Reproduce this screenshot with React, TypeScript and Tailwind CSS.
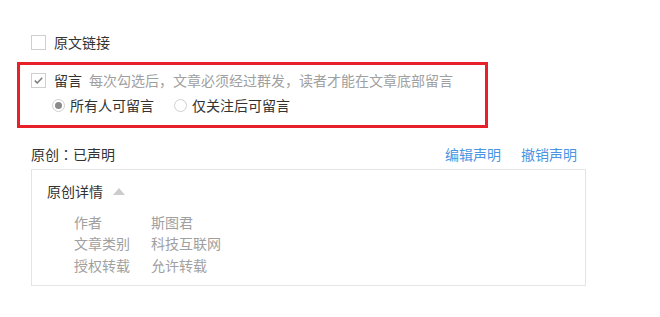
import React from 'react'

const font = { fontFamily: '"Microsoft YaHei", "Noto Sans CJK SC", "Liberation Sans", sans-serif' }

function Checkbox({ checked }: { checked?: boolean }) {
  return (
    <span className="w-[15px] h-[15px] border border-[#cfcfcf] bg-white flex items-center justify-center shrink-0">
      {checked && (
        <svg width="11" height="11" viewBox="0 0 11 11">
          <polyline points="1.8,5.6 4.3,8 9.2,2.8" fill="none" stroke="#7a7a7a" strokeWidth="1.5" />
        </svg>
      )}
    </span>
  )
}

function Radio({ checked }: { checked?: boolean }) {
  return (
    <span className="w-[13px] h-[13px] rounded-full border border-[#cfcfcf] bg-white flex items-center justify-center shrink-0">
      {checked && <span className="w-[7px] h-[7px] rounded-full bg-[#8a8a8a]" />}
    </span>
  )
}

const details = [
  { label: '作者', value: '斯图君' },
  { label: '文章类别', value: '科技互联网' },
  { label: '授权转载', value: '允许转载' },
]

export default function App() {
  return (
    <div className="w-[660px] h-[317px] bg-white overflow-hidden text-[14px] text-[#333]" style={font}>
      {/* link option */}
      <div className="mt-[32px] ml-[31px] h-[20px] flex items-center gap-[8px]">
        <Checkbox />
        <span className="leading-[20px]">原文链接</span>
      </div>

      {/* comment option, highlighted */}
      <div className="mt-[10px] ml-[17px] w-[471px] h-[66px] border-[3px] border-[#e8202a] pt-[5px]">
        <div className="pl-[11px] h-[20px] flex items-center">
          <Checkbox checked />
          <span className="ml-[8px] leading-[20px]">留言</span>
          <span className="ml-[7px] leading-[20px] text-[#a0a0a0]">每次勾选后，文章必须经过群发，读者才能在文章底部留言</span>
        </div>
        <div className="mt-[5px] pl-[32px] h-[20px] flex items-center">
          <Radio checked />
          <span className="ml-[5px] leading-[20px]">所有人可留言</span>
          <span className="ml-[20px]"><Radio /></span>
          <span className="ml-[5px] leading-[20px]">仅关注后可留言</span>
        </div>
      </div>

      {/* original declaration */}
      <div className="mt-[16px] ml-[31px] w-[546px] h-[20px] flex items-center justify-between">
        <span className="leading-[20px]">
          原创<span style={{ fontFamily: '"Noto Sans CJK TC", sans-serif' }}>：</span>已声明
        </span>
        <div className="flex gap-[20px] text-[#4a95e3] leading-[20px]">
          <span>编辑声明</span>
          <span>撤销声明</span>
        </div>
      </div>

      <div className="mt-[5px] ml-[31px] w-[555px] h-[117px] border border-[#e4e4e4] pt-[11px] pl-[15px]">
        <div className="h-[20px] flex items-center">
          <span className="leading-[20px]">原创详情</span>
          <svg className="ml-[10px]" width="12" height="7" viewBox="0 0 12 7">
            <polygon points="6,0 12,7 0,7" fill="#cccccc" />
          </svg>
        </div>
        <div className="mt-[10px] pl-[27px] text-[#a0a0a0]">
          {details.map((d) => (
            <div key={d.label} className="flex h-[21.5px] items-center leading-[20px]">
              <span className="w-[77px]">{d.label}</span>
              <span>{d.value}</span>
            </div>
          ))}
        </div>
      </div>
    </div>
  )
}
